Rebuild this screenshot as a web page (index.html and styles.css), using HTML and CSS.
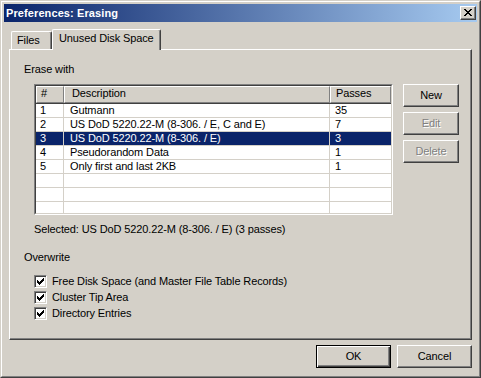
FILE: index.html
```html
<!DOCTYPE html>
<html>
<head>
<meta charset="utf-8">
<title>Preferences: Erasing</title>
<link rel="stylesheet" href="styles.css">
</head>
<body>
<div class="window">
  <div class="window-inner">
    <div class="titlebar">
      <span class="title">Preferences: Erasing</span>
      <span class="close">
        <svg width="8" height="7" viewBox="0 0 8 7" shape-rendering="crispEdges"><path fill="#000" d="M0 0h2v1H0zM6 0h2v1H6zM1 1h2v1H1zM5 1h2v1H5zM2 2h4v1H2zM3 3h2v1H3zM2 4h4v1H2zM1 5h2v1H1zM5 5h2v1H5zM0 6h2v1H0zM6 6h2v1H6z"/></svg>
      </span>
    </div>
    <div class="client">
      <div class="tabs">
        <div class="tab">Files</div>
        <div class="tab active">Unused Disk Space</div>
      </div>
      <div class="panel">
        <div class="label">Erase with</div>
        <div class="list-row">
          <div class="list">
            <div class="list-inner">
              <div class="lv-header">
                <div class="hcell c1">#</div>
                <div class="hcell c2">Description</div>
                <div class="hcell c3">Passes</div>
              </div>
              <div class="lv-row"><div class="cell c1">1</div><div class="cell c2">Gutmann</div><div class="cell c3">35</div></div>
              <div class="lv-row"><div class="cell c1">2</div><div class="cell c2">US DoD 5220.22-M (8-306. / E, C and E)</div><div class="cell c3">7</div></div>
              <div class="lv-row selected-row"><div class="cell c1">3</div><div class="cell c2">US DoD 5220.22-M (8-306. / E)</div><div class="cell c3">3</div></div>
              <div class="lv-row"><div class="cell c1">4</div><div class="cell c2">Pseudorandom Data</div><div class="cell c3">1</div></div>
              <div class="lv-row"><div class="cell c1">5</div><div class="cell c2">Only first and last 2KB</div><div class="cell c3">1</div></div>
              <div class="lv-row"><div class="cell c1"></div><div class="cell c2"></div><div class="cell c3"></div></div>
              <div class="lv-row"><div class="cell c1"></div><div class="cell c2"></div><div class="cell c3"></div></div>
              <div class="lv-row"><div class="cell c1"></div><div class="cell c2"></div><div class="cell c3"></div></div>
            </div>
          </div>
          <div class="side-buttons">
            <div class="btn">New</div>
            <div class="btn disabled">Edit</div>
            <div class="btn disabled">Delete</div>
          </div>
        </div>
        <div class="selected-info">Selected: US DoD 5220.22-M (8-306. / E) (3 passes)</div>
        <div class="label overwrite">Overwrite</div>
        <div class="checks">
          <div class="check"><span class="box"><svg width="9" height="9" viewBox="0 0 9 9" shape-rendering="crispEdges"><path fill="#000" d="M1 3h1v3H1zM2 4h1v3H2zM3 5h1v3H3zM4 4h1v3H4zM5 3h1v3H5zM6 2h1v3H6zM7 1h1v3H7z"/></svg></span><span>Free Disk Space (and Master File Table Records)</span></div>
          <div class="check"><span class="box"><svg width="9" height="9" viewBox="0 0 9 9" shape-rendering="crispEdges"><path fill="#000" d="M1 3h1v3H1zM2 4h1v3H2zM3 5h1v3H3zM4 4h1v3H4zM5 3h1v3H5zM6 2h1v3H6zM7 1h1v3H7z"/></svg></span><span>Cluster Tip Area</span></div>
          <div class="check"><span class="box"><svg width="9" height="9" viewBox="0 0 9 9" shape-rendering="crispEdges"><path fill="#000" d="M1 3h1v3H1zM2 4h1v3H2zM3 5h1v3H3zM4 4h1v3H4zM5 3h1v3H5zM6 2h1v3H6zM7 1h1v3H7z"/></svg></span><span>Directory Entries</span></div>
        </div>
      </div>
      <div class="footer">
        <div class="btn wide default">OK</div>
        <div class="btn wide">Cancel</div>
      </div>
    </div>
  </div>
</div>
</body>
</html>
```

FILE: styles.css
```css
* { box-sizing: border-box; }
html, body { margin: 0; padding: 0; }
body {
  width: 481px;
  height: 378px;
  overflow: hidden;
  background: #D4D0C8;
  font-family: "Liberation Sans", Arial, sans-serif;
  font-size: 11px;
  letter-spacing: -0.12px;
  color: #000;
}
.window {
  width: 481px;
  height: 378px;
  border: 1px solid;
  border-color: #D4D0C8 #404040 #404040 #D4D0C8;
  background: #D4D0C8;
}
.window-inner {
  height: 100%;
  border: 1px solid;
  border-color: #fff #808080 #808080 #fff;
  padding: 2px;
  display: flex;
  flex-direction: column;
}
.titlebar {
  height: 18px;
  flex: none;
  display: flex;
  align-items: center;
  padding-left: 2px;
  background: linear-gradient(to right, #0A246A, #A6CAF0);
}
.title {
  flex: 1;
  color: #fff;
  font-weight: bold;
  letter-spacing: 0.1px;
  line-height: 18px;
  white-space: nowrap;
}
.close {
  width: 16px;
  height: 14px;
  margin-right: 1px;
  background: #D4D0C8;
  border: 1px solid;
  border-color: #fff #404040 #404040 #fff;
  box-shadow: inset -1px -1px 0 #808080;
  display: flex;
  align-items: flex-start;
  justify-content: flex-start;
  padding: 2px 0 0 3px;
}
.close svg { display: block; }
.client {
  flex: 1;
  padding: 7px 5px 0 5px;
  display: flex;
  flex-direction: column;
}
.tabs {
  height: 20px;
  display: flex;
  align-items: flex-end;
  padding-left: 2px;
}
.tab {
  height: 18px;
  width: 41px;
  border-top: 1px solid #fff;
  border-left: 1px solid #fff;
  border-right: 1px solid #404040;
  box-shadow: inset -1px 0 0 #808080;
  border-radius: 2px 2px 0 0;
  padding: 1px 0 0 5px;
  line-height: 14px;
  white-space: nowrap;
  background: #D4D0C8;
}
.tab.active {
  position: relative;
  z-index: 1;
  width: 109px;
  height: 21px;
  margin-bottom: -1px;
  padding-left: 6px;
}
.panel {
  height: 291px;
  flex: none;
  border: 1px solid;
  border-color: #fff #404040 #404040 #fff;
  box-shadow: inset -1px -1px 0 #808080;
  padding: 12px 0 0 14px;
}
.label {
  line-height: 14px;
  white-space: nowrap;
}
.list-row {
  display: flex;
  margin-top: 8px;
  margin-left: 10px;
}
.list {
  width: 359px;
  height: 131px;
  border: 1px solid;
  border-color: #808080 #fff #fff #808080;
}
.list-inner {
  height: 100%;
  border: 1px solid;
  border-color: #404040 #D4D0C8 #D4D0C8 #404040;
  background: #fff;
  overflow: hidden;
}
.lv-header {
  display: flex;
  height: 18px;
  background: #D4D0C8;
  border-bottom: 1px solid #404040;
}
.hcell {
  height: 17px;
  border-top: 1px solid #fff;
  border-left: 1px solid #fff;
  border-right: 1px solid #808080;
  border-bottom: 1px solid #808080;
  line-height: 13px;
  white-space: nowrap;
}
.hcell.c1 { width: 28px; padding-left: 4px; }
.hcell.c2 { width: 266px; padding-left: 7px; }
.hcell.c3 { flex: 1; padding-left: 5px; }
.lv-row {
  display: flex;
  height: 14px;
  border-bottom: 1px solid #D4D0C8;
}
.cell {
  height: 13px;
  line-height: 13px;
  white-space: nowrap;
  overflow: hidden;
}
.cell.c1 { width: 28px; padding-left: 4px; border-right: 1px solid #D4D0C8; }
.cell.c2 { width: 266px; padding-left: 6px; border-right: 1px solid #D4D0C8; }
.cell.c3 { flex: 1; padding-left: 5px; }
.selected-row { background: #0A246A; color: #fff; }
.side-buttons {
  margin-left: 10px;
  display: flex;
  flex-direction: column;
  gap: 5px;
}
.btn {
  width: 56px;
  height: 23px;
  border: 1px solid;
  border-color: #fff #404040 #404040 #fff;
  box-shadow: inset -1px -1px 0 #808080;
  background: #D4D0C8;
  text-align: center;
  line-height: 20px;
  white-space: nowrap;
}
.btn.disabled {
  color: #808080;
  text-shadow: 1px 1px 0 #fff;
}
.btn.wide { width: 75px; }
.btn.default {
  border-color: #000;
  box-shadow: inset 1px 1px 0 #fff, inset -1px -1px 0 #404040, inset -2px -2px 0 #808080;
}
.selected-info {
  margin-top: 7px;
  margin-left: 10px;
  line-height: 14px;
  white-space: nowrap;
}
.overwrite { margin-top: 14px; }
.checks {
  margin-top: 9px;
  margin-left: 10px;
  display: flex;
  flex-direction: column;
}
.check {
  height: 16px;
  display: flex;
  align-items: flex-start;
  line-height: 16px;
  white-space: nowrap;
}
.box {
  width: 13px;
  height: 13px;
  margin-top: 2px;
  margin-right: 5px;
  flex: none;
  border: 1px solid;
  border-color: #808080 #fff #fff #808080;
  box-shadow: inset 1px 1px 0 #404040, inset -1px -1px 0 #D4D0C8;
  background: #fff;
}
.box svg { display: block; margin: 1px 0 0 1px; }
.footer {
  margin-top: 5px;
  display: flex;
  justify-content: flex-end;
  gap: 6px;
}
```
